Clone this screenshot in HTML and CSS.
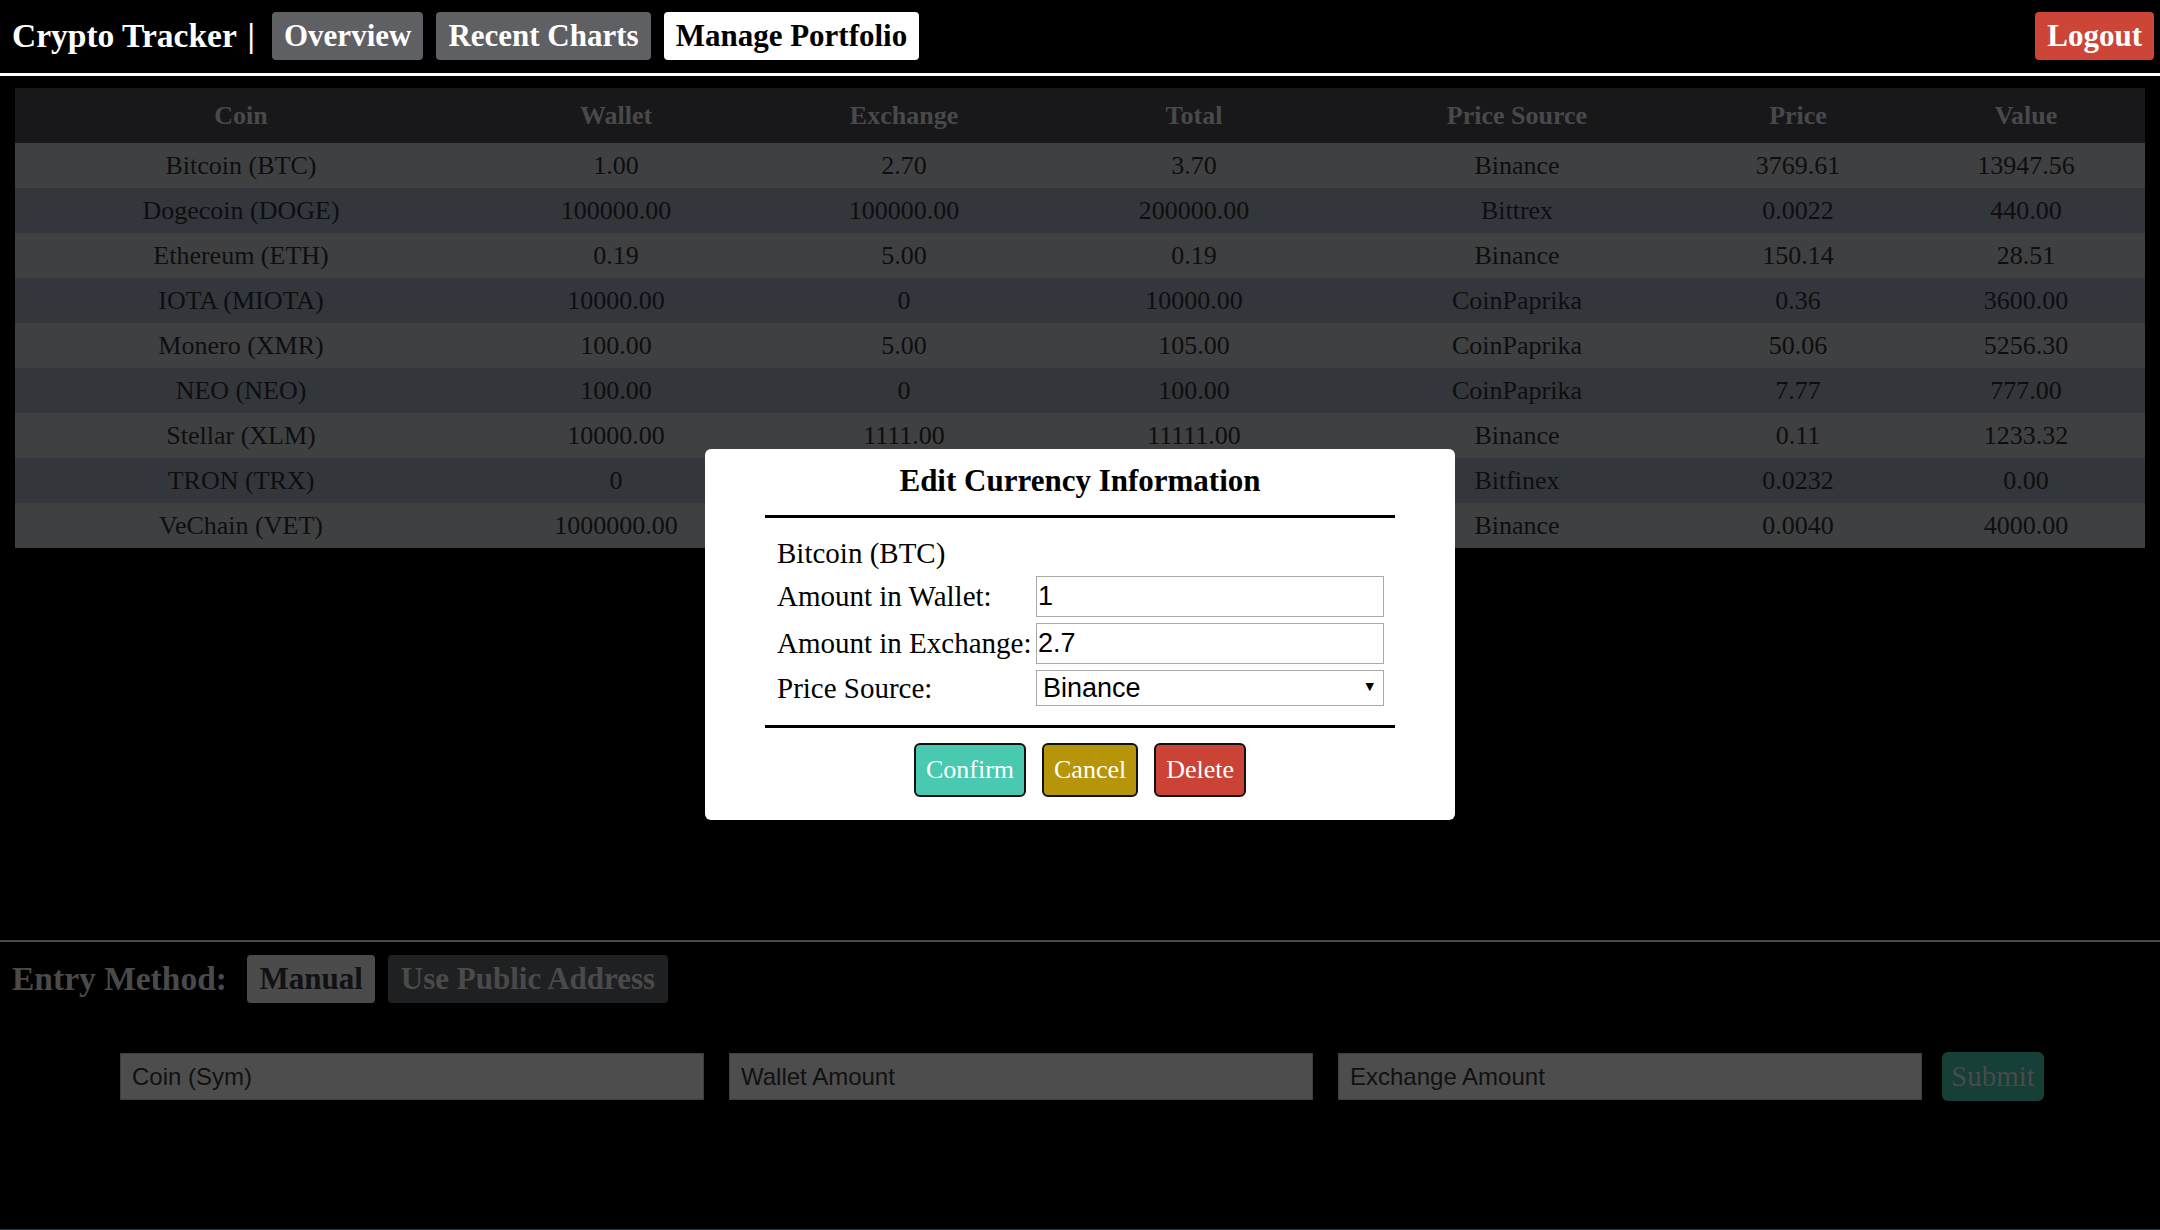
FILE: index.html
```html
<!DOCTYPE html>
<html lang="en">
<head>
<meta charset="utf-8">
<title>Crypto Tracker - Manage Portfolio</title>
<link rel="stylesheet" href="styles.css">
</head>
<body>
<header class="nav">
  <div class="nav-left">
    <span class="brand">Crypto Tracker <span class="brand-sep">|</span></span>
    <a class="nav-btn">Overview</a>
    <a class="nav-btn">Recent Charts</a>
    <a class="nav-btn active">Manage Portfolio</a>
  </div>
  <a class="nav-btn logout">Logout</a>
</header>

<main class="content">
  <table class="portfolio">
    <colgroup>
      <col class="c-coin"><col class="c-wallet"><col class="c-exchange"><col class="c-total"><col class="c-source"><col class="c-price"><col class="c-value">
    </colgroup>
    <thead>
      <tr><th>Coin</th><th>Wallet</th><th>Exchange</th><th>Total</th><th>Price Source</th><th>Price</th><th>Value</th></tr>
    </thead>
    <tbody>
      <tr><td>Bitcoin (BTC)</td><td>1.00</td><td>2.70</td><td>3.70</td><td>Binance</td><td>3769.61</td><td>13947.56</td></tr>
      <tr><td>Dogecoin (DOGE)</td><td>100000.00</td><td>100000.00</td><td>200000.00</td><td>Bittrex</td><td>0.0022</td><td>440.00</td></tr>
      <tr><td>Ethereum (ETH)</td><td>0.19</td><td>5.00</td><td>0.19</td><td>Binance</td><td>150.14</td><td>28.51</td></tr>
      <tr><td>IOTA (MIOTA)</td><td>10000.00</td><td>0</td><td>10000.00</td><td>CoinPaprika</td><td>0.36</td><td>3600.00</td></tr>
      <tr><td>Monero (XMR)</td><td>100.00</td><td>5.00</td><td>105.00</td><td>CoinPaprika</td><td>50.06</td><td>5256.30</td></tr>
      <tr><td>NEO (NEO)</td><td>100.00</td><td>0</td><td>100.00</td><td>CoinPaprika</td><td>7.77</td><td>777.00</td></tr>
      <tr><td>Stellar (XLM)</td><td>10000.00</td><td>1111.00</td><td>11111.00</td><td>Binance</td><td>0.11</td><td>1233.32</td></tr>
      <tr><td>TRON (TRX)</td><td>0</td><td>0</td><td>0</td><td>Bitfinex</td><td>0.0232</td><td>0.00</td></tr>
      <tr><td>VeChain (VET)</td><td>1000000.00</td><td>0</td><td>1000000.00</td><td>Binance</td><td>0.0040</td><td>4000.00</td></tr>
    </tbody>
  </table>

  <section class="entry">
    <div class="entry-head">
      <span class="entry-label">Entry Method:</span>
      <button class="method-btn selected">Manual</button>
      <button class="method-btn">Use Public Address</button>
    </div>
    <form class="entry-form">
      <input class="entry-input" type="text" placeholder="Coin (Sym)">
      <input class="entry-input" type="text" placeholder="Wallet Amount">
      <input class="entry-input" type="text" placeholder="Exchange Amount">
      <button class="submit-btn" type="button">Submit</button>
    </form>
  </section>
</main>
<footer class="footer"></footer>

<div class="overlay">
  <div class="modal">
    <div class="modal-title">Edit Currency Information</div>
    <div class="rule"></div>
    <div class="modal-form">
      <div class="m-label full">Bitcoin (BTC)</div>
      <label class="m-label">Amount in Wallet:</label>
      <input class="m-input" type="text" value="1">
      <label class="m-label">Amount in Exchange:</label>
      <input class="m-input" type="text" value="2.7">
      <label class="m-label">Price Source:</label>
      <div class="select-wrap">
        <select class="m-select">
          <option>Binance</option>
          <option>Bittrex</option>
          <option>Bitfinex</option>
          <option>CoinPaprika</option>
        </select>
        <span class="select-arrow">&#9660;</span>
      </div>
    </div>
    <div class="rule rule-bottom"></div>
    <div class="modal-actions">
      <button class="m-btn confirm">Confirm</button>
      <button class="m-btn cancel">Cancel</button>
      <button class="m-btn delete">Delete</button>
    </div>
  </div>
</div>
</body>
</html>
```

FILE: styles.css
```css
* { box-sizing: border-box; }

html, body {
  margin: 0;
  padding: 0;
  background: #000;
  font-family: "Liberation Serif", "Times New Roman", serif;
}

body {
  min-height: 1230px;
  position: relative;
}

/* ---------- nav ---------- */
.nav {
  display: flex;
  align-items: center;
  justify-content: space-between;
  padding: 12px 6px 13px 12px;
  border-bottom: 3px solid #fff;
}

.nav-left {
  display: flex;
  align-items: center;
  gap: 13px;
}

.brand {
  color: #fff;
  font-weight: bold;
  font-size: 33.5px;
  margin-right: 4px;
  line-height: 48px;
}

.brand-sep {
  margin-left: 3px;
}

.nav-btn {
  display: block;
  background: #5f6064;
  color: #fff;
  font-weight: bold;
  font-size: 31px;
  line-height: 36px;
  padding: 6px 12px;
  border-radius: 4px;
}

.nav-btn.active {
  background: #fff;
  color: #000;
}

.nav-btn.logout {
  background: #cd4537;
  color: #fff;
}

/* ---------- table ---------- */
.content {
  padding: 12px 15px 0;
}

.portfolio {
  width: 100%;
  border-collapse: collapse;
  table-layout: fixed;
  font-size: 26px;
}

.c-coin { width: 452px; }
.c-wallet { width: 298px; }
.c-exchange { width: 278px; }
.c-total { width: 302px; }
.c-source { width: 344px; }
.c-price { width: 218px; }
.c-value { width: 238px; }

.portfolio th {
  background: #18181a;
  color: #48494b;
  font-weight: bold;
  height: 55px;
  padding: 0;
  text-align: center;
}

.portfolio td {
  height: 45px;
  padding: 0;
  text-align: center;
  color: #0e0e0f;
}

.portfolio tbody tr:nth-child(odd) { background: #3f4042; }
.portfolio tbody tr:nth-child(even) { background: #33363b; }

/* ---------- entry section ---------- */
.entry {
  margin: 392px -15px 0;
  border-top: 2px solid #4a4a4b;
}

.entry-head {
  display: flex;
  align-items: center;
  gap: 13px;
  padding: 13px 12px 0;
}

.entry-label {
  color: #4a4a4b;
  font-weight: bold;
  font-size: 33.5px;
  margin-right: 7px;
}

.method-btn {
  font-family: "Liberation Serif", "Times New Roman", serif;
  font-weight: bold;
  font-size: 31px;
  line-height: 36px;
  padding: 6px 12.5px;
  border: none;
  border-radius: 4px;
  background: #1f2022;
  color: #4a4a4b;
}

.method-btn.selected {
  background: #4b4b4c;
  color: #111;
}

.entry-form {
  display: flex;
  justify-content: center;
  align-items: center;
  margin-top: 49px;
  padding-left: 4px;
}

.entry-input {
  width: 584px;
  height: 47px;
  margin-right: 25px;
  background: #4d4d4d;
  border: 1px solid #3e3e3e;
  padding: 0 11px;
  font-family: "Liberation Sans", Arial, sans-serif;
  font-size: 24px;
  color: #111;
}

.entry-input:nth-of-type(3) { margin-right: 20px; }

.entry-input::placeholder { color: #111; opacity: 1; }

.submit-btn {
  font-family: "Liberation Serif", "Times New Roman", serif;
  font-size: 29px;
  height: 49px;
  width: 102px;
  padding: 0;
  border: none;
  border-radius: 6px;
  background: #153f37;
  color: #4a4a4b;
}

.footer {
  position: absolute;
  left: 0;
  right: 0;
  top: 1229px;
  height: 1px;
  background: #26374a;
}

/* ---------- modal ---------- */
.overlay {
  position: fixed;
  inset: 0;
  display: flex;
  justify-content: center;
  align-items: flex-start;
  padding-top: 449px;
}

.modal {
  width: 750px;
  background: #fff;
  border-radius: 6px;
  padding: 14px 60px 23px;
}

.modal-title {
  text-align: center;
  font-weight: bold;
  font-size: 31px;
  line-height: 36px;
  color: #000;
}

.rule {
  height: 3px;
  background: #000;
  margin-top: 16px;
}

.rule-bottom {
  margin-top: 19px;
}

.modal-form {
  display: grid;
  grid-template-columns: 252px 348px;
  column-gap: 7px;
  row-gap: 6px;
  align-items: center;
  margin-top: 19px;
  padding: 0 12px;
}

.m-label {
  font-size: 29px;
  line-height: 33px;
  color: #000;
  white-space: nowrap;
}

.m-label.full {
  grid-column: 1 / -1;
}

.m-input {
  height: 41px;
  width: 100%;
  border: 1px solid #a9a9a9;
  padding: 0 1px;
  font-family: "Liberation Sans", Arial, sans-serif;
  font-size: 27px;
  color: #000;
  background: #fff;
}

.select-wrap {
  position: relative;
  height: 36px;
}

.m-select {
  appearance: none;
  -webkit-appearance: none;
  width: 100%;
  height: 36px;
  border: 1px solid #a9a9a9;
  border-radius: 0;
  background: #fff;
  padding: 0 6px;
  font-family: "Liberation Sans", Arial, sans-serif;
  font-size: 27px;
  color: #000;
}

.select-arrow {
  position: absolute;
  right: 10px;
  top: 11px;
  font-size: 11px;
  line-height: 12px;
  color: #000;
  pointer-events: none;
  font-family: "DejaVu Sans", sans-serif;
}

.modal-actions {
  display: flex;
  justify-content: center;
  gap: 16px;
  margin-top: 15px;
}

.m-btn {
  font-family: "Liberation Serif", "Times New Roman", serif;
  font-size: 26px;
  line-height: 30px;
  padding: 10px 10px;
  border: 2px solid #111;
  border-radius: 6px;
  color: #fff;
}

.m-btn.confirm { background: #48c9b0; }
.m-btn.cancel { background: #b7950b; }
.m-btn.delete { background: #cb4335; }
```
